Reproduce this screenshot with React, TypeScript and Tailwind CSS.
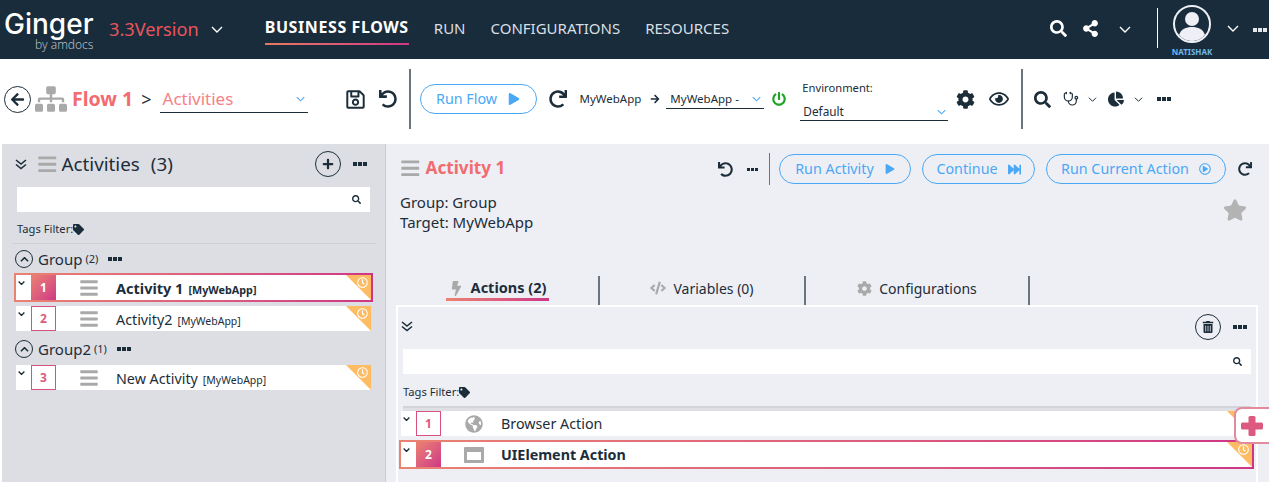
import React from 'react';
import {
  FaArrowLeft, FaArrowRight, FaBars, FaBolt, FaChartPie, FaCode, FaCog, FaFastForward, FaGlobeAmericas,
  FaPlay, FaPlus, FaRedo, FaSearch, FaShareAlt, FaSitemap, FaStar, FaTag, FaTrashAlt, FaUndo,
  FaPowerOff, FaRegSave, FaRegClock, FaRegPlayCircle, FaRegEye,
} from 'react-icons/fa';
import { Stethoscope } from 'lucide-react';

const Chevron = ({ className = '', sw = 1.4 }: { className?: string; sw?: number }) => (
  <svg viewBox="0 0 12 7" fill="none" stroke="currentColor" strokeWidth={sw} className={className}>
    <path d="M1 1l5 5 5-5" />
  </svg>
);

const DoubleChevron = () => (
  <svg viewBox="0 0 12 11" fill="none" stroke="currentColor" strokeWidth="1.6" className="h-[11px] w-[12px] text-[#1c2d3a]">
    <path d="M1 1l5 4 5-4M1 5.5l5 4 5-4" />
  </svg>
);

const Dots = ({ className = 'bg-[#1c2d3a]', small }: { className?: string; small?: boolean }) => (
  <div className="flex gap-[1px]">
    <span className={`${small ? 'h-[3px] w-[3px]' : 'h-[4px] w-[4px]'} ${className}`} />
    <span className={`${small ? 'h-[3px] w-[3px]' : 'h-[4px] w-[4px]'} ${className}`} />
    <span className={`${small ? 'h-[3px] w-[3px]' : 'h-[4px] w-[4px]'} ${className}`} />
  </div>
);

const Pill = ({ label, icon, w, gap }: { label: string; icon: React.ReactNode; w: string; gap: string }) => (
  <button className={`flex h-[30px] items-center justify-center rounded-full border border-[#4aa8f5] text-[14.3px] text-[#4aa8f5] ${w} ${gap}`}>
    <span>{label}</span>
    {icon}
  </button>
);

const Corner = () => (
  <div className="absolute right-0 top-0 h-0 w-0 border-l-[25px] border-t-[25px] border-l-transparent border-t-[#fdbb63]">
    <FaRegClock className="absolute right-[3px] top-[-23px] text-[11px] text-white" />
  </div>
);

const NumberCell = ({ n, selected }: { n: number; selected?: boolean }) =>
  selected ? (
    <div className="flex h-[25px] w-[25px] items-center justify-center bg-gradient-to-br from-[#ea8270] to-[#cf3585] text-[12px] font-bold text-white">{n}</div>
  ) : (
    <div className="flex h-[25px] w-[25px] items-center justify-center border border-[#d9527f] text-[12px] font-bold text-[#de5a7c]">{n}</div>
  );

const ActivityRow = ({ n, name, selected }: { n: number; name: string; selected?: boolean }) => {
  const row = (
    <div className="relative flex h-[25px] items-center bg-white">
      <Chevron sw={2.4} className="mb-[10px] ml-[2px] h-[4px] w-[7px] text-[#1c2d3a]" />
      <div className="ml-[6px]"><NumberCell n={n} selected={selected} /></div>
      <FaBars className="ml-[23px] text-[20px] text-[#a9a9a9]" />
      <div className="ml-[17px] flex items-baseline pt-[2px] text-[#1c2d3a]">
        <span className={selected ? 'text-[14.5px] font-bold' : 'text-[14.3px]'}>{name}</span>
        <span className={selected ? 'ml-[5px] text-[10.8px] font-bold' : 'ml-[5px] text-[10.5px]'}>[MyWebApp]</span>
      </div>
      <Corner />
    </div>
  );
  return selected ? (
    <div className="mx-[12px] mt-[5px] bg-gradient-to-r from-[#ea8270] to-[#cf3585] p-[2px]">{row}</div>
  ) : (
    <div className="mx-[14px]">{row}</div>
  );
};

const ActionRow = ({ n, name, icon, selected }: { n: number; name: string; icon: React.ReactNode; selected?: boolean }) => {
  const row = (
    <div className="relative flex h-[25px] items-center bg-white">
      <Chevron sw={2.4} className="mb-[10px] ml-[2px] h-[4px] w-[7px] text-[#1c2d3a]" />
      <div className="ml-[6px]"><NumberCell n={n} selected={selected} /></div>
      <div className="ml-[24px] flex w-[18px] justify-center text-[18px] text-[#a9a9a9]">{icon}</div>
      <span className={`ml-[18px] pt-[1px] text-[14.3px] text-[#1c2d3a] ${selected ? 'font-bold' : ''}`}>{name}</span>
      <Corner />
    </div>
  );
  return selected ? (
    <div className="ml-[1px] mr-[2px] mt-[4px] bg-gradient-to-r from-[#ea8270] to-[#cf3585] p-[2px]">{row}</div>
  ) : (
    <div className="ml-[3px] mr-[4px]">{row}</div>
  );
};

const SearchBox = () => (
  <div className="flex h-[25px] items-center justify-end bg-white pr-[9px]">
    <FaSearch className="text-[9px] text-[#1c2d3a]" />
  </div>
);

const TagsFilter = () => (
  <div className="flex h-[16px] items-center text-[11.2px] text-[#1c2d3a]">
    Tags Filter:<FaTag className="text-[11px]" />
  </div>
);

const GroupRow = ({ name, count, mt }: { name: string; count: number; mt: string }) => (
  <div className={`ml-[13px] flex h-[18px] items-center text-[#1c2d3a] ${mt}`}>
    <div className="flex h-[18px] w-[18px] items-center justify-center rounded-full border border-[#1c2d3a]">
      <Chevron sw={2.2} className="h-[5px] w-[9px] rotate-180" />
    </div>
    <span className="ml-[5px] text-[15px]">{name}</span>
    <span className="ml-[3px] text-[11px]">({count})</span>
    <div className="ml-[10px]"><Dots /></div>
  </div>
);

const Tab = ({ label, icon, active }: { label: string; icon: React.ReactNode; active?: boolean }) => (
  <div className="flex h-[29px] items-start justify-center border-r-2 border-[#6b7580]">
    <div className="flex flex-col items-center">
      <div className={`flex h-[22px] items-center gap-[7px] px-[3px] pt-[2px] text-[#1c2d3a] ${active ? 'text-[14.5px] font-bold' : 'text-[14px]'}`}>
        {icon}
        {label}
      </div>
      {active && <div className="h-[3px] w-full bg-gradient-to-r from-[#ea8270] to-[#cf3585]" />}
    </div>
  </div>
);

export default function App() {
  return (
    <div className="relative h-[482px] w-[1269px] overflow-hidden bg-white font-['Noto_Sans',sans-serif] text-[#1c2d3a]">
      {/* top nav */}
      <header className="flex h-[59px] items-center bg-[#182c3b] text-white">
        <div className="ml-[4px] flex w-[90px] flex-col">
          <span className="font-['Inter',sans-serif] text-[28px] font-medium leading-[30px]">Ginger</span>
          <span className="ml-[31px] text-[12px] font-light leading-[12px] text-[#b9bfc4]">by amdocs</span>
        </div>
        <span className="ml-[15px] text-[18.2px] text-[#e9555b]">3.3Version</span>
        <Chevron className="ml-[12px] h-[7px] w-[12px]" />
        <nav className="ml-[42px] flex items-center">
          <div className="flex h-[31px] flex-col items-center justify-between pt-[3px]">
            <span className="text-[16px] font-bold leading-[20px] tracking-[0.6px]">BUSINESS FLOWS</span>
            <div className="h-[2px] w-[144px] bg-gradient-to-r from-[#ea7a5e] to-[#cf3585]" />
          </div>
          <div className="ml-[25px] flex gap-[25px] pb-[3px] text-[15px] text-[#d8dfe4]">
            <span>RUN</span>
            <span>CONFIGURATIONS</span>
            <span>RESOURCES</span>
          </div>
        </nav>
        <div className="ml-auto flex items-center">
          <FaSearch className="mb-[2px] text-[17px]" />
          <FaShareAlt className="mb-[2px] ml-[15px] text-[17px]" />
          <Chevron className="ml-[20px] h-[7px] w-[12px]" />
          <div className="mb-[4px] ml-[26px] h-[40px] w-[1px] bg-white" />
          <div className="ml-[14px] flex w-[40px] flex-col items-center self-start pt-[2px]">
            <div className="h-[38px] w-[38px] overflow-hidden rounded-full border-2 border-[#eef0f5]">
              <svg viewBox="0 0 34 34" className="h-full w-full fill-[#eef0f5]">
                <circle cx="17" cy="12" r="7" />
                <path d="M4 28c2-6 7-8 13-8s11 2 13 8c-3 4-8 6-13 6s-10-2-13-6z" />
              </svg>
            </div>
            <span className="mt-[4px] text-[8px] font-bold leading-[10px] text-[#6fb7ea]">NATISHAK</span>
          </div>
          <Chevron className="mb-[2px] ml-[15px] h-[7px] w-[12px]" />
          <div className="ml-[14px] mr-[2px]"><Dots className="bg-[#e6e8ec]" /></div>
        </div>
      </header>

      {/* toolbar */}
      <div className="flex h-[85px] items-center bg-white pb-[5px]">
        <div className="ml-[4px] flex h-[27px] w-[27px] items-center justify-center rounded-full border border-[#1c2d3a]">
          <FaArrowLeft className="text-[15px]" />
        </div>
        <FaSitemap className="ml-[4px] text-[32px] text-[#a9a9a9]" />
        <span className="ml-[5px] text-[19.5px] font-bold text-[#f26b6f]">Flow 1</span>
        <span className="ml-[8px] text-[18px]">&gt;</span>
        <div className="ml-[8px] flex h-[27px] w-[148px] items-center justify-between border-b border-[#1c2d3a] pl-[3px] pr-[3px]">
          <span className="text-[17px] text-[#f58287]">Activities</span>
          <Chevron className="h-[6px] w-[9px] text-[#4aa8f5]" />
        </div>
        <FaRegSave className="ml-[37px] text-[21px]" />
        <FaUndo className="ml-[13px] text-[18px]" />
        <div className="ml-[12px] h-[60px] w-[2px] bg-[#6b7580]" />
        <div className="ml-[9px]">
          <Pill label="Run Flow" w="w-[117px]" gap="gap-[11px]" icon={<FaPlay className="text-[12px]" />} />
        </div>
        <FaRedo className="ml-[12px] text-[18px]" />
        <span className="ml-[13px] text-[11.5px]">MyWebApp</span>
        <FaArrowRight className="ml-[9px] text-[10px]" />
        <div className="ml-[6px] flex h-[20px] w-[98px] items-center justify-between border-b border-[#1c2d3a] pl-[4px] pr-[3px]">
          <span className="text-[11.5px]">MyWebApp -</span>
          <Chevron className="h-[6px] w-[9px] text-[#4aa8f5]" />
        </div>
        <FaPowerOff className="ml-[8px] text-[14px] text-[#1fa328]" />
        <div className="ml-[14px] flex w-[148px] flex-col">
          <span className="ml-[2px] text-[11.2px] leading-[20px]">Environment:</span>
          <div className="mt-[3px] flex h-[20px] items-center justify-between border-b border-[#1c2d3a] pl-[3px] pr-[2px] pt-[4px]">
            <span className="text-[11.8px]">Default</span>
            <Chevron className="h-[6px] w-[9px] text-[#4aa8f5]" />
          </div>
        </div>
        <FaCog className="ml-[8px] text-[19px]" />
        <FaRegEye className="ml-[14px] text-[20px]" />
        <div className="ml-[12px] h-[60px] w-[2px] bg-[#6b7580]" />
        <FaSearch className="ml-[11px] text-[17px]" />
        <Stethoscope size={16} strokeWidth={1.8} className="ml-[12px]" />
        <Chevron className="ml-[9px] h-[5px] w-[9px]" />
        <FaChartPie className="ml-[11px] text-[16px]" />
        <Chevron className="ml-[10px] h-[5px] w-[9px]" />
        <div className="ml-[14px]"><Dots /></div>
      </div>

      <div className="flex h-[338px]">
        {/* activities list */}
        <aside className="ml-[2px] w-[383px] bg-[#dcdee3] pt-[7px]">
          <div className="flex h-[26px] items-center pl-[13px] pr-[18px]">
            <DoubleChevron />
            <FaBars className="ml-[10px] text-[20.5px] text-[#a9a9a9]" />
            <span className="ml-[4px] text-[18.8px]">Activities</span>
            <span className="ml-[11px] text-[18.8px]">(3)</span>
            <div className="ml-auto flex h-[26px] w-[26px] items-center justify-center rounded-full border border-[#1c2d3a]">
              <FaPlus className="text-[12px]" />
            </div>
            <div className="ml-[12px]"><Dots /></div>
          </div>
          <div className="ml-[15px] mr-[15px] mt-[10px]"><SearchBox /></div>
          <div className="ml-[15px] mt-[9px]"><TagsFilter /></div>
          <div className="ml-[10px] mr-[9px] mt-[6px] h-[1px] bg-[#cfd1d6]" />
          <GroupRow name="Group" count={2} mt="mt-[6px]" />
          <ActivityRow n={1} name="Activity 1" selected />
          <div className="mt-[4px]"><ActivityRow n={2} name="Activity2" /></div>
          <GroupRow name="Group2" count={1} mt="mt-[9px]" />
          <div className="mt-[7px]"><ActivityRow n={3} name="New Activity" /></div>
        </aside>

        {/* activity detail */}
        <main className="flex-1 border-l border-[#c9cbd0] bg-[#eeeff5]">
          <div className="mt-[9px] flex h-[32px] items-center">
            <FaBars className="mb-[1px] ml-[14px] text-[20.5px] text-[#a9a9a9]" />
            <span className="ml-[5px] pb-[2px] text-[17.2px] font-bold text-[#f26b6f]">Activity 1</span>
            <div className="ml-auto flex items-center">
              <FaUndo className="text-[15px]" />
              <div className="ml-[14px]"><Dots small /></div>
              <div className="ml-[11px] h-[32px] w-[1px] bg-[#6b7580]" />
              <div className="ml-[9px] flex gap-[11px]">
                <Pill label="Run Activity" w="w-[132px]" gap="gap-[11px]" icon={<FaPlay className="text-[10px]" />} />
                <Pill label="Continue" w="w-[113px]" gap="gap-[10px]" icon={<FaFastForward className="text-[13px]" />} />
                <Pill label="Run Current Action" w="w-[180px]" gap="gap-[10px]" icon={<FaRegPlayCircle className="text-[12px]" />} />
              </div>
              <FaRedo className="ml-[12px] mr-[17px] text-[14px]" />
            </div>
          </div>
          <div className="mt-[7px] flex h-[40px] justify-between pl-[14px] pr-[22px]">
            <div className="text-[15px] leading-[20px]">
              <div>Group: Group</div>
              <div>Target: MyWebApp</div>
            </div>
            <FaStar className="mt-[6px] text-[24px] text-[#b3b3b3]" />
          </div>
          <div className="ml-[11px] mt-[44px] grid w-[644px] grid-cols-[203px_206px_224px]">
            <Tab label="Actions (2)" active icon={<FaBolt className="text-[15px] text-[#a9a9a9]" />} />
            <Tab label="Variables (0)" icon={<FaCode className="text-[16px] text-[#a9a9a9]" />} />
            <Tab label="Configurations" icon={<FaCog className="text-[15px] text-[#a9a9a9]" />} />
          </div>
          {/* actions box */}
          <div className="ml-[10px] h-[177px] w-[862px] border-x-2 border-t-2 border-white">
            <div className="mt-[7px] flex h-[26px] items-center pl-[3px] pr-[9px]">
              <div className="mb-[2px]"><DoubleChevron /></div>
              <div className="ml-auto flex h-[26px] w-[26px] items-center justify-center rounded-full border border-[#1c2d3a]">
                <FaTrashAlt className="text-[12px]" />
              </div>
              <div className="ml-[12px]"><Dots /></div>
            </div>
            <div className="ml-[5px] mr-[5px] mt-[9px]"><SearchBox /></div>
            <div className="ml-[5px] mt-[10px]"><TagsFilter /></div>
            <div className="ml-[5px] mr-[5px] mt-[6px] h-[2px] bg-[#d3d4d9]" />
            <div className="mx-[5px] h-[3px] bg-[#dfe0e6]" />
            <ActionRow n={1} name="Browser Action" icon={<FaGlobeAmericas />} />
            <ActionRow
              n={2}
              name="UIElement Action"
              selected
              icon={
                <svg viewBox="0 0 20 16" className="h-[16px] w-[20px] shrink-0 fill-[#a9a9a9]">
                  <path d="M1 0h18a1 1 0 0 1 1 1v14a1 1 0 0 1-1 1H1a1 1 0 0 1-1-1V1a1 1 0 0 1 1-1zm2 5v8h14V5z" fillRule="evenodd" />
                </svg>
              }
            />
          </div>
        </main>
      </div>

      {/* floating add */}
      <div className="absolute left-[1234px] top-[407px] flex h-[37px] w-[40px] items-center rounded-l-[8px] border-2 border-[#e38a9d] bg-white pl-[5px]">
        <svg viewBox="0 0 22 20" className="h-[20px] w-[22px] fill-[#dc5a80]">
          <rect x="7.5" y="0" width="7" height="20" rx="1.5" />
          <rect x="0" y="6.5" width="22" height="7" rx="1.5" />
        </svg>
      </div>
    </div>
  );
}
